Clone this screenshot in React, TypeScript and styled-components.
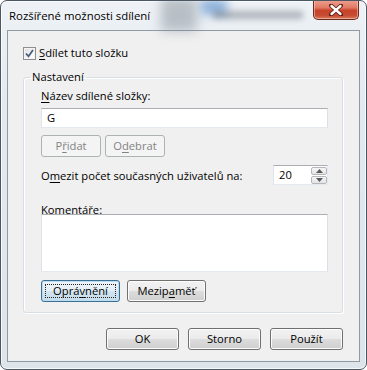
import React from "react";
import styled, { createGlobalStyle, css } from "styled-components";

const GlobalStyle = createGlobalStyle`
  html, body { margin: 0; padding: 0; background: #ffffff; }
  body { font-family: "Open Sans", "Noto Sans", sans-serif; }
  * { box-sizing: border-box; }
`;

const FONT = `"Open Sans", "Noto Sans", sans-serif`;

const Window = styled.div`
  position: relative;
  width: 367px;
  height: 370px;
  border: 1px solid #4b5763;
  border-radius: 7px;
  background: linear-gradient(180deg, #eef2f6 0%, #e2e9ef 30%, #dde4ea 100%);
  box-shadow: inset 0 0 0 1px rgba(255, 255, 255, 0.75);
  display: flex;
  flex-direction: column;
  overflow: hidden;
  font-family: ${FONT};
  font-size: 11.2px;
  color: #000;
`;

const Glass = styled.div<{ $l: number; $t: number; $w: number; $h: number; $c: string; $b: number }>`
  position: absolute;
  left: ${(p) => p.$l}px;
  top: ${(p) => p.$t}px;
  width: ${(p) => p.$w}px;
  height: ${(p) => p.$h}px;
  background: ${(p) => p.$c};
  filter: blur(${(p) => p.$b}px);
  pointer-events: none;
`;

const TitleBar = styled.div`
  position: relative;
  height: 29px;
  display: flex;
  align-items: flex-start;
  padding-left: 8px;
`;

const Title = styled.div`
  margin-top: 7px;
  font-size: 11.4px;
  line-height: 16px;
  color: #000;
  text-shadow: 0 0 6px rgba(255, 255, 255, 0.9);
`;

const CloseButton = styled.div`
  margin-left: auto;
  margin-right: 7px;
  margin-top: -1px;
  width: 46px;
  height: 20px;
  border: 1px solid #6b2a1e;
  border-top: none;
  border-radius: 0 0 5px 5px;
  background: linear-gradient(180deg, #eba292 0%, #e07a63 40%, #c8432b 55%, #c64a31 80%, #d77a60 100%);
  box-shadow: inset 0 0 0 1px rgba(255, 220, 210, 0.5);
  display: flex;
  align-items: center;
  justify-content: center;
`;

const Client = styled.div`
  flex: 1;
  margin: 0 6px 7px 6px;
  border: 1px solid #8e9aa6;
  background: #f0f0f0;
  padding: 14px 16px 0 15px;
  display: flex;
  flex-direction: column;
`;

const CheckRow = styled.label`
  display: flex;
  align-items: center;
  gap: 3px;
  height: 16px;
  line-height: 16px;
`;

const CheckBox = styled.span`
  width: 13px;
  height: 13px;
  border: 1px solid #8f8f8f;
  background: linear-gradient(135deg, #dcdcdc 0%, #f6f6f6 60%, #ffffff 100%);
  box-shadow: inset 0 0 0 1px #f4f4f4;
  display: flex;
  align-items: center;
  justify-content: center;
`;

const Key = styled.span`
  text-decoration: underline;
  text-underline-offset: 2px;
  text-decoration-thickness: 1px;
`;

const Group = styled.fieldset`
  margin: 8px 0 0 0;
  padding: 3px 14px 10px 17px;
  border: 1px solid #d5dfe5;
  border-radius: 3px;
  box-shadow: 1px 1px 0 #ffffff, inset 1px 1px 0 #ffffff;
  display: flex;
  flex-direction: column;
  min-width: 0;
`;

const Legend = styled.legend`
  margin-left: -11px;
  padding: 0 2px;
  line-height: 16px;
`;

const FieldLabel = styled.div<{ $mt?: number }>`
  line-height: 16px;
  margin-top: ${(p) => p.$mt ?? 0}px;
`;

const TextInput = styled.div<{ $h: number; $mt: number }>`
  height: ${(p) => p.$h}px;
  margin-top: ${(p) => p.$mt}px;
  background: #ffffff;
  border: 1px solid #e3e9ef;
  border-top-color: #abadb3;
  border-left-color: #e2e3ea;
  border-right-color: #dbdfe6;
  padding: 0 5px;
  line-height: 18px;
`;

const ButtonRow = styled.div<{ $mt: number; $gap: number }>`
  display: flex;
  gap: ${(p) => p.$gap}px;
  margin-top: ${(p) => p.$mt}px;
`;

const Button = styled.div<{ $w: number; $variant?: "normal" | "disabled" | "default" }>`
  position: relative;
  width: ${(p) => p.$w}px;
  height: 22px;
  border-radius: 3px;
  display: flex;
  align-items: center;
  justify-content: center;
  line-height: 16px;
  ${(p) =>
    p.$variant === "disabled"
      ? css`
          border: 1px solid #adb2b5;
          background: #f4f4f4;
          color: #838383;
        `
      : p.$variant === "default"
      ? css`
          border: 1px solid #3d6f93;
          background: linear-gradient(180deg, #eef5f9 0%, #e3eef5 50%, #d3e5f0 50%, #c6dcea 100%);
          box-shadow: inset 0 0 0 1px #b9def3;
          color: #000;
        `
      : css`
          border: 1px solid #707070;
          background: linear-gradient(180deg, #f2f2f2 0%, #ebebeb 50%, #dddddd 50%, #cfcfcf 100%);
          box-shadow: inset 0 0 0 1px #fcfcfc;
          color: #000;
        `}
`;

const FocusRing = styled.span`
  position: absolute;
  inset: 3px;
  border: 1px dotted #222;
  pointer-events: none;
`;

const LimitRow = styled.div`
  display: flex;
  align-items: center;
  margin-top: 8px;
  height: 20px;
`;

const Spinner = styled.div`
  margin-left: auto;
  display: flex;
  width: 55px;
  height: 20px;
  background: #fff;
  border: 1px solid #e3e9ef;
  border-top-color: #abadb3;
  border-left-color: #e2e3ea;
`;

const SpinValue = styled.div`
  flex: 1;
  padding-left: 5px;
  line-height: 18px;
`;

const SpinArrows = styled.div`
  width: 16px;
  display: flex;
  flex-direction: column;
  gap: 1px;
  padding: 1px 0 0 0;
`;

const SpinBtn = styled.div`
  flex: 1;
  border: 1px solid #b4b8bd;
  border-radius: 2px;
  background: linear-gradient(180deg, #f6f6f6 0%, #e4e4e4 100%);
  display: flex;
  align-items: center;
  justify-content: center;
`;

const Footer = styled.div`
  display: flex;
  justify-content: flex-end;
  gap: 9px;
  margin-top: 15px;
`;

export default function App() {
  return (
    <>
      <GlobalStyle />
      <Window>
        <Glass $l={160} $t={-4} $w={36} $h={34} $c="rgba(120,130,140,0.45)" $b={6} />
        <Glass $l={200} $t={-2} $w={26} $h={16} $c="rgba(70,130,200,0.55)" $b={5} />
        <Glass $l={212} $t={10} $w={90} $h={8} $c="rgba(60,70,80,0.35)" $b={3} />
        <TitleBar>
          <Title>Rozšířené možnosti sdílení</Title>
          <CloseButton>
            <svg width="16" height="12" viewBox="0 0 16 12">
              <path d="M3 1.5 L13 10.5 M13 1.5 L3 10.5" stroke="#5a1c12" strokeWidth="4" strokeLinecap="round" />
              <path d="M3.5 2 L12.5 10 M12.5 2 L3.5 10" stroke="#ffffff" strokeWidth="2.4" strokeLinecap="round" />
            </svg>
          </CloseButton>
        </TitleBar>
        <Client>
          <CheckRow>
            <CheckBox>
              <svg width="9" height="9" viewBox="0 0 9 9">
                <path d="M1 4.5 L3.5 7.3 L8 1" stroke="#4a5f80" strokeWidth="1.8" fill="none" />
              </svg>
            </CheckBox>
            <span>
              <Key>S</Key>dílet tuto složku
            </span>
          </CheckRow>
          <Group>
            <Legend>Nastavení</Legend>
            <FieldLabel>
              <Key>N</Key>ázev sdílené složky:
            </FieldLabel>
            <TextInput $h={20} $mt={4}>G</TextInput>
            <ButtonRow $mt={7} $gap={4}>
              <Button $w={60} $variant="disabled">
                P<Key>ř</Key>idat
              </Button>
              <Button $w={60} $variant="disabled">
                O<Key>d</Key>ebrat
              </Button>
            </ButtonRow>
            <LimitRow>
              <span>
                O<Key>m</Key>ezit počet současných uživatelů na:
              </span>
              <Spinner>
                <SpinValue>20</SpinValue>
                <SpinArrows>
                  <SpinBtn>
                    <svg width="7" height="4" viewBox="0 0 7 4">
                      <path d="M0 4 L3.5 0 L7 4 Z" fill="#5a5a5a" />
                    </svg>
                  </SpinBtn>
                  <SpinBtn>
                    <svg width="7" height="4" viewBox="0 0 7 4">
                      <path d="M0 0 L3.5 4 L7 0 Z" fill="#5a5a5a" />
                    </svg>
                  </SpinBtn>
                </SpinArrows>
              </Spinner>
            </LimitRow>
            <FieldLabel $mt={17}>
              <Key>K</Key>omentáře:
            </FieldLabel>
            <TextInput $h={58} $mt={-4} />
            <ButtonRow $mt={8} $gap={7}>
              <Button $w={79} $variant="default">
                <FocusRing />
                Oprá<Key>v</Key>nění
              </Button>
              <Button $w={79}>
                Mezip<Key>a</Key>měť
              </Button>
            </ButtonRow>
          </Group>
          <Footer>
            <Button $w={73}>OK</Button>
            <Button $w={73}>Storno</Button>
            <Button $w={73}>Použít</Button>
          </Footer>
        </Client>
      </Window>
    </>
  );
}
